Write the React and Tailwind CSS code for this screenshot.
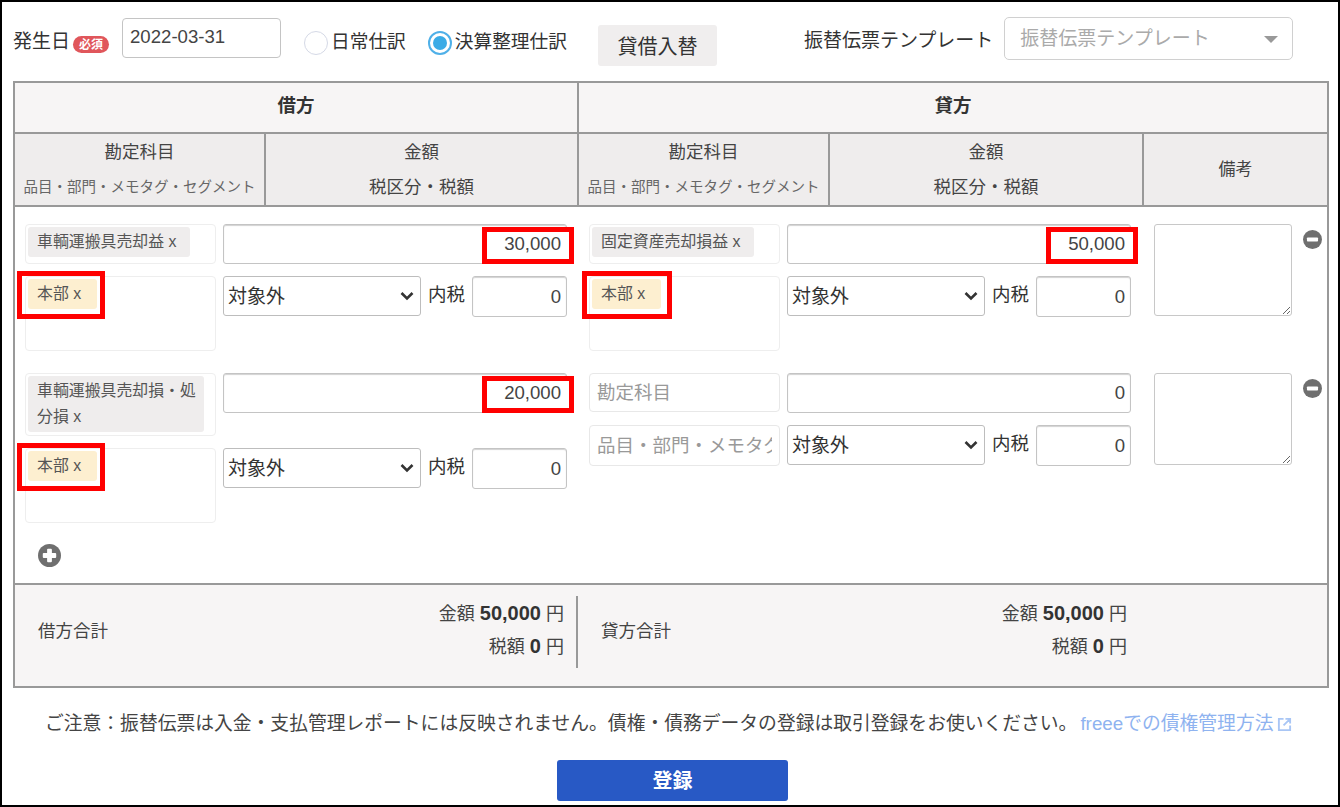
import React from "react";

const font = { fontFamily: '"Liberation Sans", "Noto Sans CJK JP", sans-serif' };

const inputCls =
  "h-full w-full rounded-[3px] border border-[#c4c4c4] bg-white px-[5px] text-right text-[18.6px] text-[#444] outline-none shadow-[inset_0_1px_1px_rgba(0,0,0,0.18)]";

function Tag({ children, yellow, marked, markClass, pad = "pr-[13px]" }) {
  return (
    <div
      className={`relative w-fit max-w-[176px] rounded-[3px] py-[2px] pl-[9px] text-[15.9px] leading-[26px] text-[#555] ${pad} ${
        yellow ? "bg-[#fdefd0]" : "bg-[#efeded]"
      }`}
    >
      {children} x
      {marked && (
        <span
          className={`pointer-events-none absolute -top-[8px] h-[48px] border-[5px] border-[#f00] ${markClass}`}
        />
      )}
    </div>
  );
}

function TagBox({ className, children }) {
  return (
    <div className={`w-[191px] rounded-[4px] border border-[#eeeeee] p-[2px] ${className}`}>
      {children}
    </div>
  );
}

function PlaceholderBox({ text, h }) {
  return (
    <input
      placeholder={text}
      readOnly
      className={`w-[191px] rounded-[4px] border border-[#e8e8e8] px-[7px] text-[18.5px] text-[#888] outline-none placeholder:text-[#999] ${h}`}
    />
  );
}

function Amount({ value, marked }) {
  return (
    <div className="relative h-[40px] w-[344px]">
      <input readOnly defaultValue={value} className={inputCls} />
      {marked && (
        <span className="pointer-events-none absolute -right-[7px] top-[3px] h-[37px] w-[92px] border-[5px] border-[#f00]">
          <span className="absolute right-0 top-0 h-full w-[4px] bg-white" />
        </span>
      )}
    </div>
  );
}

function TaxRow() {
  return (
    <div className="flex items-start">
      <div className="relative h-[40px] w-[198px]">
        <select className="h-full w-full appearance-none rounded-[3px] border border-[#bdbdbd] bg-white pl-[4px] pt-[2px] text-[19px] text-[#333]">
          <option>対象外</option>
        </select>
        <svg
          viewBox="0 0 14 10"
          className="pointer-events-none absolute right-[7px] top-[15px] h-[10px] w-[14px] fill-none stroke-[#333] stroke-[2.6]"
        >
          <path d="M1.5 2l5.5 5.5L12.5 2" />
        </svg>
      </div>
      <span className="ml-[7px] w-[37px] pt-[5px] text-[18.5px] leading-[28px] whitespace-nowrap text-[#333]">
        内税
      </span>
      <div className="ml-[7px] h-[41px] w-[95px]">
        <input readOnly defaultValue="0" className={inputCls} />
      </div>
    </div>
  );
}

function Side({ top, bottom, amount, marked }) {
  return (
    <div className="flex w-[542px] flex-col gap-3">
      <div className="flex gap-[7px]">
        {top}
        <Amount value={amount} marked={marked} />
      </div>
      <div className="flex gap-[7px]">
        {bottom}
        <TaxRow />
      </div>
    </div>
  );
}

function Note() {
  return (
    <textarea className="ml-[1px] h-[92px] w-[138px] rounded-[3px] border border-[#c8c8c8] bg-white outline-none" />
  );
}

function RoundIcon({ plus, className }) {
  return (
    <svg viewBox="0 0 24 24" className={className}>
      <circle cx="12" cy="12" r="12" fill="#6f6f6f" />
      <rect x="5" y="9.5" width="14" height="5" rx="1" fill="#fff" />
      {plus && <rect x="9.5" y="5" width="5" height="14" rx="1" fill="#fff" />}
    </svg>
  );
}

function HeadCell({ a, b, small, className }) {
  return (
    <div className={`flex flex-col items-center border-r-2 border-[#999] pt-[1px] ${className}`}>
      <div className="text-[17.5px] leading-[35px] text-[#444]">{a}</div>
      <div className={`whitespace-nowrap leading-[35px] ${small ? "text-[14.5px] text-[#666]" : "text-[17.5px] text-[#444]"}`}>
        {b}
      </div>
    </div>
  );
}

function Total({ amount, tax }) {
  return (
    <div className="pb-[4px] text-right text-[18px] leading-[32px] text-[#444]">
      <div>
        金額 <b className="text-[20px] text-[#333]">{amount}</b> 円
      </div>
      <div>
        税額 <b className="text-[20px] text-[#333]">{tax}</b> 円
      </div>
    </div>
  );
}

export default function App() {
  return (
    <div style={font} className="h-[807px] w-[1340px] border-2 border-black bg-white">
      {/* top bar */}
      <div className="flex h-[79px] items-start pl-[11px] text-[#333]">
        <span className="mt-[25px] text-[19px] leading-[30px]">発生日</span>
        <span className="ml-[3px] mt-[34px] flex h-[17px] w-[36px] items-center justify-center rounded-full bg-[#e0565b] text-[12px] font-bold text-white">
          必須
        </span>
        <input
          readOnly
          defaultValue="2022-03-31"
          className="ml-[13px] mt-[16px] h-[40px] w-[159px] rounded-[4px] border border-[#c4c4c4] px-[7px] pb-[2px] text-[18.6px] text-[#444] outline-none"
        />
        <span className="ml-[23px] mt-[29px] h-[24px] w-[24px] rounded-full border border-[#d5d9e6] bg-white" />
        <span className="ml-[3px] mt-[25px] text-[18.7px] leading-[30px]">日常仕訳</span>
        <span className="ml-[22px] mt-[29px] flex h-[24px] w-[24px] items-center justify-center rounded-full border-2 border-[#4fb0e8] bg-white">
          <span className="h-[14px] w-[14px] rounded-full bg-[#3aabe6]" />
        </span>
        <span className="ml-[3px] mt-[25px] text-[18.7px] leading-[30px]">決算整理仕訳</span>
        <button className="ml-[31px] mt-[23px] h-[41px] w-[119px] rounded-[3px] bg-[#f0eeee] pt-[2px] text-[20px] text-[#333]">
          貸借入替
        </button>
        <span className="ml-[87px] mt-[24px] text-[19px] leading-[30px]">振替伝票テンプレート</span>
        <div className="ml-[11px] mt-[15px] flex h-[43px] w-[289px] items-center justify-between rounded-[5px] border border-[#d0d0d0] pl-[15px] pr-[14px] pt-[2px] text-[19px] text-[#aaa]">
          <span>振替伝票テンプレート</span>
          <span className="h-0 w-0 border-x-[7px] border-t-[7px] border-x-transparent border-t-[#999]" />
        </div>
      </div>

      {/* table */}
      <div className="ml-[11px] w-[1316px] border-2 border-[#999]">
        <div className="flex h-[51px] border-b-2 border-[#999] bg-[#f7f5f5] text-[18.5px] font-bold text-[#333]">
          <div className="flex w-[564px] items-center justify-center border-r-2 border-[#999] pb-[3px]">借方</div>
          <div className="flex flex-1 items-center justify-center pb-[3px]">貸方</div>
        </div>
        <div className="flex h-[73px] border-b-2 border-[#999] bg-[#efeded]">
          <HeadCell className="w-[251px]" a="勘定科目" b="品目・部門・メモタグ・セグメント" small />
          <HeadCell className="w-[313px]" a="金額" b="税区分・税額" />
          <HeadCell className="w-[251px]" a="勘定科目" b="品目・部門・メモタグ・セグメント" small />
          <HeadCell className="w-[314px]" a="金額" b="税区分・税額" />
          <div className="flex flex-1 items-center justify-center text-[17px] text-[#444]">備考</div>
        </div>

        {/* body */}
        <div className="h-[376px] px-[10px] pt-[17px]">
          <div className="flex items-start gap-[22px]">
            <Side
              amount="30,000"
              marked
              top={
                <TagBox className="h-[40px]">
                  <Tag>車輌運搬具売却益</Tag>
                </TagBox>
              }
              bottom={
                <TagBox className="h-[75px]">
                  <Tag yellow marked pad="pr-[16px]" markClass="-left-[11px] w-[88px]">本部</Tag>
                </TagBox>
              }
            />
            <Side
              amount="50,000"
              marked
              top={
                <TagBox className="h-[40px]">
                  <Tag>固定資産売却損益</Tag>
                </TagBox>
              }
              bottom={
                <TagBox className="h-[75px]">
                  <Tag yellow marked pad="pr-[16px]" markClass="-left-[10px] w-[90px]">本部</Tag>
                </TagBox>
              }
            />
            <div className="flex items-start gap-[11px]">
              <Note />
              <RoundIcon className="mt-[6px] h-[19px] w-[19px]" />
            </div>
          </div>

          <div className="mt-[22px] flex items-start gap-[22px]">
            <Side
              amount="20,000"
              marked
              top={
                <TagBox className="h-[63px]">
                  <Tag pad="pr-[8px]">車輌運搬具売却損・処分損</Tag>
                </TagBox>
              }
              bottom={
                <TagBox className="h-[75px]">
                  <Tag yellow marked pad="pr-[16px]" markClass="-left-[11px] w-[88px]">本部</Tag>
                </TagBox>
              }
            />
            <Side
              amount="0"
              top={<PlaceholderBox text="勘定科目" h="h-[39px]" />}
              bottom={<PlaceholderBox text="品目・部門・メモタグ・セグメント" h="h-[41px]" />}
            />
            <div className="flex items-start gap-[11px]">
              <Note />
              <RoundIcon className="mt-[6px] h-[19px] w-[19px]" />
            </div>
          </div>

          <RoundIcon plus className="ml-[13px] mt-[21px] h-[23px] w-[23px]" />
        </div>

        {/* totals */}
        <div className="flex h-[103px] border-t-2 border-[#999] bg-[#f7f5f5] pt-[11px]">
          <div className="flex h-[72px] w-[563px] items-center justify-between border-r-2 border-[#999] pl-[23px] pr-[12px]">
            <span className="pb-[2px] text-[17.5px] text-[#444]">借方合計</span>
            <Total amount="50,000" tax="0" />
          </div>
          <div className="ml-[23px] flex h-[72px] w-[526px] items-center justify-between">
            <span className="pb-[2px] text-[17.5px] text-[#444]">貸方合計</span>
            <Total amount="50,000" tax="0" />
          </div>
        </div>
      </div>

      {/* notice */}
      <div className="flex h-[72px] items-center whitespace-nowrap pl-[43px] text-[18.8px] text-[#444]">
        <span>ご注意：振替伝票は入金・支払管理レポートには反映されません。債権・債務データの登録は取引登録をお使いください。</span>
        <span className="ml-[3px] text-[18.8px] text-[#8fb3f0]">freeeでの債権管理方法</span>
        <svg viewBox="0 0 16 16" className="ml-[4px] h-[15px] w-[15px] fill-none stroke-[#a9c6f5] stroke-2">
          <path d="M7 2H2v12h12V9M9 2h5v5M14 2L7 9" />
        </svg>
      </div>

      <div className="flex justify-center pl-[5px]">
        <button className="h-[41px] w-[231px] rounded-[3px] bg-[#2859c5] text-[20px] font-bold text-white">
          登録
        </button>
      </div>
    </div>
  );
}
